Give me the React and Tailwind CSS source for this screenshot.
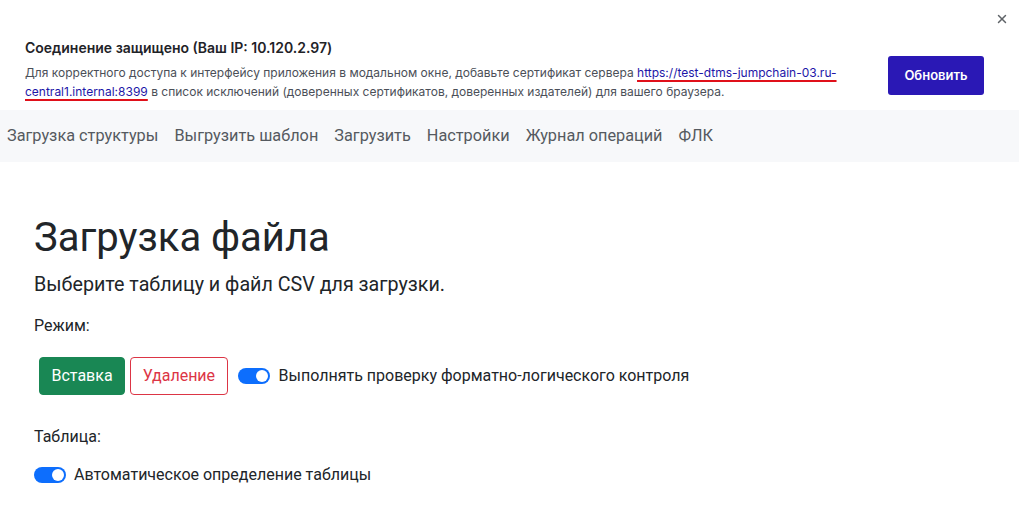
import React, { useState } from 'react';
import { X } from 'lucide-react';

const font = { fontFamily: 'Roboto, "Noto Sans", "Liberation Sans", sans-serif' };
const bannerFont = { fontFamily: 'Inter, Roboto, "Liberation Sans", sans-serif' };

const Toggle = ({ checked, onChange }) => (
  <button
    onClick={() => onChange(!checked)}
    className={`relative w-8 h-4 rounded-full shrink-0 ${checked ? 'bg-[#0d6efd]' : 'bg-gray-300'}`}
  >
    <span
      className={`absolute top-[2px] w-3 h-3 rounded-full bg-white ${checked ? 'left-[18px]' : 'left-[2px]'}`}
    />
  </button>
);

const navItems = [
  'Загрузка структуры',
  'Выгрузить шаблон',
  'Загрузить',
  'Настройки',
  'Журнал операций',
  'ФЛК',
];

export default function App() {
  const [flk, setFlk] = useState(true);
  const [auto, setAuto] = useState(true);
  const [mode, setMode] = useState('insert');

  return (
    <div className="w-full min-h-screen bg-white text-[#212529]" style={font}>
      {/* Certificate banner */}
      <div className="relative h-[110px] flex items-start pl-[25px] pr-[35px] pt-[38px]" style={bannerFont}>
        <div className="w-[830px]">
          <p className="text-[14px] font-semibold text-[#1f2328] leading-[20px]">
            Соединение защищено (Ваш IP: 10.120.2.97)
          </p>
          <p className="mt-[5px] text-[12px] leading-[19px] text-[#4b4f58]">
            Для корректного доступа к интерфейсу приложения в модальном окне, добавьте сертификат сервера{' '}
            <a
              href="#"
              className="text-[#1d16a8] underline decoration-[#e0101a] decoration-2 underline-offset-[3px]"
            >
              https://test-dtms-jumpchain-03.ru-central1.internal:8399
            </a>{' '}
            в список исключений (доверенных сертификатов, доверенных издателей) для вашего браузера.
          </p>
        </div>
        <button className="ml-auto mt-[18px] w-[96px] h-[39px] rounded-[3px] bg-[#2a18b5] text-white text-[13px] font-semibold">
          Обновить
        </button>
        <button className="absolute right-[10px] top-[12px] text-[#5f6368]">
          <X size={14} strokeWidth={2.5} />
        </button>
      </div>

      {/* Nav */}
      <nav className="h-[52px] bg-[#f7f8fa] flex items-center px-[7px] gap-4">
        {navItems.map((item) => (
          <a key={item} href="#" className="text-[16.3px] text-[#555a60] whitespace-nowrap">
            {item}
          </a>
        ))}
      </nav>

      {/* Content */}
      <main className="px-[34px] pt-[52px]">
        <h1 className="text-[40px] leading-[48px] font-normal">Загрузка файла</h1>
        <p className="mt-[8px] text-[19.7px] leading-[30px]">Выберите таблицу и файл CSV для загрузки.</p>

        <p className="mt-[14px] text-[16px] leading-[24px]">Режим:</p>

        <div className="mt-[19px] flex items-center">
          <button
            onClick={() => setMode('insert')}
            className={`ml-[5px] h-[38px] px-[11.5px] rounded-[4px] text-[16px] border ${
              mode === 'insert'
                ? 'bg-[#198754] border-[#198754] text-white'
                : 'bg-white border-[#198754] text-[#198754]'
            }`}
          >
            Вставка
          </button>
          <button
            onClick={() => setMode('delete')}
            className={`ml-[5px] h-[38px] px-[11.5px] rounded-[4px] text-[16px] border ${
              mode === 'delete'
                ? 'bg-[#dc3545] border-[#dc3545] text-white'
                : 'bg-white border-[#dc3545] text-[#dc3545]'
            }`}
          >
            Удаление
          </button>
          <div className="ml-[10px] flex items-center gap-[9px]">
            <Toggle checked={flk} onChange={setFlk} />
            <span className="text-[16px]">Выполнять проверку форматно-логического контроля</span>
          </div>
        </div>

        <p className="mt-[30px] text-[16px] leading-[24px]">Таблица:</p>

        <div className="mt-[14px] flex items-center gap-[8px]">
          <Toggle checked={auto} onChange={setAuto} />
          <span className="text-[16px]">Автоматическое определение таблицы</span>
        </div>
      </main>
    </div>
  );
}
